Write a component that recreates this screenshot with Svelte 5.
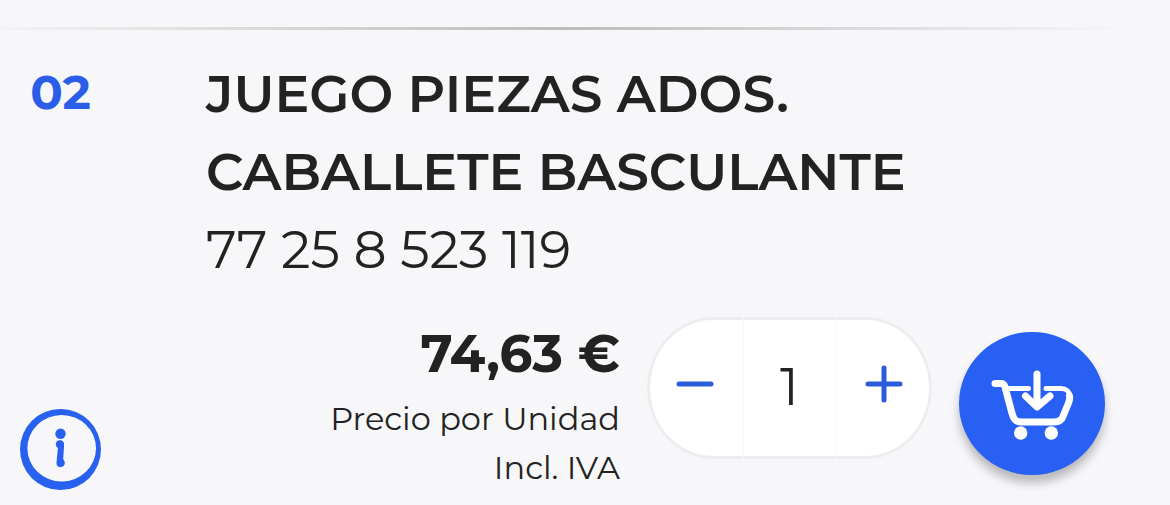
<script>
  let { index = '02', name = 'JUEGO PIEZAS ADOS. CABALLETE BASCULANTE', ref = '77 25 8 523 119', price = '74,63 €' } = $props();

  let quantity = $state(1);

  function step(delta) {
    quantity = Math.max(1, Number(quantity) + delta);
  }
</script>

<article class="part">
  <hr />
  <div class="body">
    <div class="side">
      <span class="index">{index}</span>
      <button class="info" aria-label="Información">
        <svg viewBox="0 0 81 81">
          <path fill-rule="evenodd" d="M40.5 0a40.5 40.5 0 1 1 0 81a40.5 40.5 0 1 1 0-81zM41.700 6a34.300 33.300 0 1 0 0 66.600a34.300 33.300 0 1 0 0-66.600z" />
          <circle cx="40.500" cy="24.700" r="5.200" />
          <path d="M35.800 35.300c0-2.500 1.700-4.100 4.100-4.100 2.600 0 4.500 1.900 4.200 4.700l-.900 14.300c1 .900 1.600 2.200 1.600 3.900 0 2.500-1.900 4.100-4.300 4.100-2.600 0-4.200-1.800-4-4.700l1.400-14.600c-1.300-.700-2.100-1.900-2.100-3.600z" />
        </svg>
      </button>
    </div>

    <div class="main">
      <h2>{name}</h2>
      <p class="ref">{ref}</p>

      <div class="buy">
        <div class="cost">
          <strong>{price}</strong>
          <span>Precio por Unidad</span>
          <span>Incl. IVA</span>
        </div>

        <div class="stepper">
          <button aria-label="Menos" onclick={() => step(-1)}>
            <svg viewBox="0 0 38 38"><path d="M3 19h32" /></svg>
          </button>
          <input type="text" inputmode="numeric" aria-label="Cantidad" bind:value={quantity} />
          <button aria-label="Más" onclick={() => step(1)}>
            <svg viewBox="0 0 38 38"><path d="M3 19h32M19 3v32" /></svg>
          </button>
        </div>

        <button class="cart" aria-label="Añadir al carrito">
          <svg viewBox="0 0 84 72">
            <path class="basket" d="M5 15.500h6c2.500 0 3.400 1.500 4 3.500l7.200 27c1.500 5.500 3.500 8 9 8H64c5 0 7.500-1.500 9-5.500L78.500 35c1.200-3 1.500-4.500 1-7" />
            <path class="rim" d="M17 20.500h21.500M56 20.500h15c5 0 8.500 3 9 7.500" />
            <path class="arrow" d="M47 6v25M35.500 28l11.500 11 13-11" />
            <circle cx="30.700" cy="65" r="6.700" />
            <circle cx="61.300" cy="65" r="6.700" />
          </svg>
        </button>
      </div>
    </div>
  </div>
</article>

<style>
  :global(body) {
    margin: 0;
    background: #f7f7fa;
  }

  .part {
    padding: 27px 40px 13px 20px;
    color: #222;
    font-family: Montserrat, Inter, sans-serif;
  }

  hr {
    height: 3px;
    margin: 0 0 25px -20px;
    border: 0;
    background: linear-gradient(90deg, #f3f3f5, #bcbcbd 50%, #f7f7fa);
  }

  .body {
    display: flex;
    gap: 105px;
  }

  .side {
    display: flex;
    flex-direction: column;
    justify-content: space-between;
    width: 81px;
    padding-bottom: 2px;
  }

  .index {
    color: #2a5ee8;
    font-size: 48px;
    font-weight: 700;
    line-height: 74px;
    text-align: center;
  }

  button {
    padding: 0;
    border: 0;
    background: none;
    cursor: pointer;
  }

  svg { display: block; }

  .info svg {
    width: 81px;
    height: 81px;
    fill: #2860f0;
  }

  .main { flex: 1; }

  h2 {
    max-width: 740px;
    margin: 0;
    font-size: 52px;
    font-weight: 600;
    line-height: 78px;
  }

  .ref {
    margin: 0;
    font-size: 52px;
    font-weight: 400;
    line-height: 78px;
  }

  .buy {
    display: flex;
    justify-content: flex-end;
    align-items: flex-start;
    gap: 27px;
    padding: 28px 25px 0 0;
  }

  .cost {
    display: flex;
    flex-direction: column;
    text-align: right;
  }

  .cost strong {
    margin-bottom: 3px;
    font-size: 52px;
    font-weight: 700;
    line-height: 74px;
  }

  .cost span {
    font-size: 32px;
    font-weight: 400;
    line-height: 49px;
  }

  .stepper {
    display: flex;
    width: 285px;
    height: 142px;
    overflow: hidden;
    border-radius: 66px / 71px;
    background: #fff;
    box-shadow: inset 0 0 0 3px #ededf1;
  }

  .stepper button {
    display: flex;
    flex: 1;
    align-items: center;
    justify-content: center;
    padding-bottom: 8px;
  }

  .stepper svg {
    width: 38px;
    height: 38px;
    fill: none;
    stroke: #2a5cdc;
    stroke-width: 5;
    stroke-linecap: round;
  }

  .stepper input {
    box-sizing: border-box;
    width: 93px;
    padding: 0 0 4px;
    border: 1px solid #f7f7fa;
    border-width: 0 1px;
    background: none;
    color: #222;
    font-family: inherit;
    font-size: 52px;
    font-weight: 400;
    text-align: center;
  }

  .cart {
    display: flex;
    align-items: center;
    justify-content: center;
    width: 146px;
    height: 143px;
    margin-top: 15px;
    border-radius: 50%;
    background: #2860f4;
    box-shadow: 0 8px 10px rgba(0, 0, 0, 0.25);
  }

  .cart svg {
    width: 84px;
    height: 72px;
    fill: #fff;
  }

  .cart path {
    fill: none;
    stroke: #fff;
    stroke-linecap: round;
    stroke-linejoin: round;
  }

  .cart .basket { stroke-width: 7; }
  .cart .rim { stroke-width: 5; }
  .cart .arrow { stroke-width: 7; }
</style>
